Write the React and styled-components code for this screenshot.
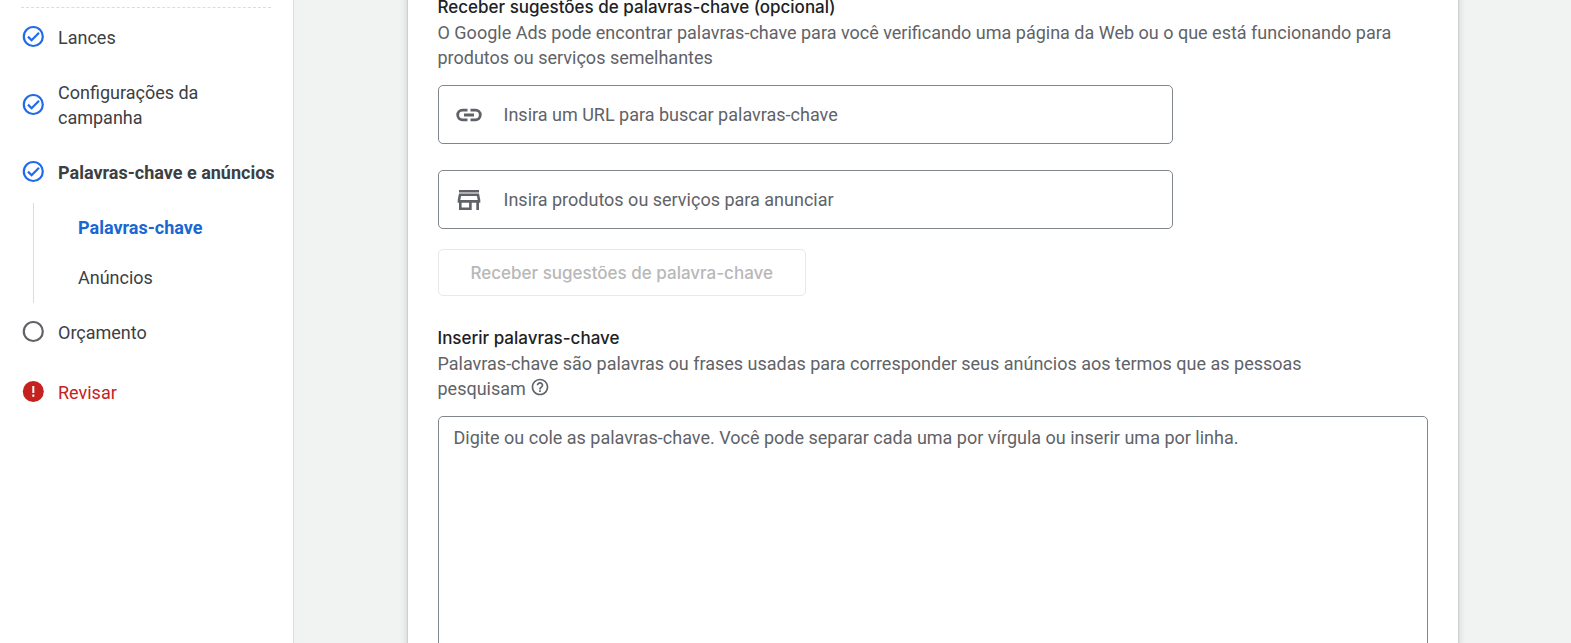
import React, { useState } from 'react';
import styled, { createGlobalStyle, css } from 'styled-components';
import { MdHelpOutline } from 'react-icons/md';

const GlobalStyle = createGlobalStyle`
  :root {
    --text: #3c4043;
    --text-strong: #202124;
    --text-muted: #5f6368;
    --border: #80868b;
    --line: #dadce0;
    --blue: #1f6bea;
    --blue-dark: #1967d2;
    --red: #c5221f;
    --body-font: Roboto, 'Liberation Sans', sans-serif;
    --title-font: Inter, Roboto, sans-serif;
  }
  * {
    box-sizing: border-box;
  }
  body {
    margin: 0;
    font-family: var(--body-font);
    font-size: 18px;
    line-height: 25px;
    color: var(--text);
    overflow: hidden;
  }
`;

const Page = styled.div`
  display: flex;
  height: 100vh;
  background: #f1f3f2;
`;

const Sidebar = styled.nav`
  width: 294px;
  flex-shrink: 0;
  padding: 7px 12px 0 21px;
  background: #fff;
  border-right: 1px solid var(--line);
`;

const Divider = styled.hr`
  width: 250px;
  margin: 0;
  border: 0;
  border-top: 1px dashed var(--line);
`;

const StepList = styled.ul`
  list-style: none;
  margin: 0;
  padding: 0;
`;

const Step = styled.a`
  display: flex;
  align-items: center;
  gap: 12px;
  min-height: 60px;
  padding: 12px 0 13px;
  color: ${({ $error }) => ($error ? 'var(--red)' : 'inherit')};
  font-weight: ${({ $active }) => ($active ? 700 : 400)};
  text-decoration: none;

  svg {
    flex-shrink: 0;
    margin-bottom: 2px;
  }
`;

const SubList = styled.ul`
  list-style: none;
  margin: 0 0 0 12px;
  padding: 0 0 0 44px;
  border-left: 1px solid var(--line);
`;

const SubStep = styled.a`
  display: block;
  line-height: 50px;
  color: ${({ $active }) => ($active ? 'var(--blue-dark)' : 'inherit')};
  font-weight: ${({ $active }) => ($active ? 700 : 400)};
  text-decoration: none;
`;

const Main = styled.main`
  flex: 1;
  min-width: 0;
  display: flex;
  justify-content: center;
  overflow: hidden;
`;

const Card = styled.div`
  width: 100%;
  max-width: 1050px;
  margin-top: -5px;
  padding: 0 30px;
  background: #fff;
  box-shadow: 0 1px 2px rgba(60, 64, 67, 0.3), 0 2px 6px 2px rgba(60, 64, 67, 0.15);
`;

const Section = styled.section`
  margin-bottom: 30px;
`;

const Title = styled.h2`
  margin: 0;
  font-family: var(--title-font);
  font-size: 17px;
  font-weight: 500;
  color: var(--text-strong);
`;

const Description = styled.p`
  max-width: 970px;
  margin: 0 0 15px;
  color: var(--text-muted);
`;

const NoWrap = styled.span`
  white-space: nowrap;

  svg {
    vertical-align: -2px;
  }
`;

const fieldBorder = css`
  border: 1px solid var(--border);
  border-radius: 5px;
`;

const Field = styled.label`
  ${fieldBorder}
  display: flex;
  align-items: center;
  gap: 20px;
  max-width: 735px;
  height: 59px;
  margin-bottom: ${({ $last }) => ($last ? '20px' : '26px')};
  padding: 0 15px;
  color: var(--text-muted);
`;

const inputText = css`
  font: inherit;
  color: var(--text);
  outline: none;

  &::placeholder {
    color: var(--text-muted);
    opacity: 1;
  }
`;

const Input = styled.input`
  ${inputText}
  flex: 1;
  min-width: 0;
  padding: 0;
  border: 0;
  background: none;
`;

const SuggestButton = styled.button`
  height: 47px;
  padding: 0 32px;
  border: 1px solid #e8e8e8;
  border-radius: 5px;
  background: #fff;
  font-family: var(--title-font);
  font-size: 17px;
  font-weight: 500;
  color: #b8b8b8;
`;

const Keywords = styled.textarea`
  ${inputText}
  ${fieldBorder}
  display: block;
  width: 100%;
  height: 300px;
  padding: 8px 15px;
  resize: none;
`;

const DoneIcon = () => (
  <svg width="25" height="25" viewBox="0 0 25 25" fill="none" stroke="var(--blue)" strokeWidth="2.2">
    <circle cx="12.3" cy="12.5" r="9.5" />
    <path d="M7 12.6l3.6 3.6 7.4-7.400" />
  </svg>
);

const TodoIcon = () => (
  <svg width="25" height="25" viewBox="0 0 25 25" fill="none" stroke="var(--text-muted)" strokeWidth="2.2">
    <circle cx="12.3" cy="12.5" r="9.5" />
  </svg>
);

const ErrorIcon = () => (
  <svg width="25" height="25" viewBox="0 0 25 25">
    <circle cx="12.3" cy="12.5" r="10.5" fill="var(--red)" />
    <path d="M11.300 7h2v7h-2zM11.300 15.600h2v2.200h-2z" fill="#fff" />
  </svg>
);

const LinkIcon = () => (
  <svg width="30" height="30" viewBox="0 0 30 30" fill="none" stroke="currentColor" strokeWidth="2.8">
    <path d="M13.500 10.200H8.500a4.800 4.800 0 0 0 0 9.600h5M16.500 10.200h5a4.800 4.800 0 0 1 0 9.600h-5M10 15h10" />
  </svg>
);

const StoreIcon = () => (
  <svg width="30" height="30" viewBox="0 0 30 30" fill="currentColor" fillRule="evenodd">
    <path d="M5 5h20v2.500H5z" />
    <path d="M5 8.500h20l1.300 6.500v2.700H25V25h-2.700v-7.300h-4.600V25H5v-7.300H3.700V15zM7.100 11l-.8 4h17.400l-.8-4zM7.600 17.700v4.800h7.500v-4.800z" />
  </svg>
);

const icons = { done: DoneIcon, todo: TodoIcon, error: ErrorIcon };

const steps = [
  { label: 'Lances', status: 'done' },
  { label: 'Configurações da campanha', status: 'done' },
  {
    label: 'Palavras-chave e anúncios',
    status: 'done',
    active: true,
    children: [{ label: 'Palavras-chave', active: true }, { label: 'Anúncios' }],
  },
  { label: 'Orçamento', status: 'todo' },
  { label: 'Revisar', status: 'error' },
];

const NavStep = ({ label, status, active, children }) => {
  const Icon = icons[status];
  return (
    <li>
      <Step href="#" $active={active} $error={status === 'error'}>
        <Icon />
        <span>{label}</span>
      </Step>
      {children && (
        <SubList>
          {children.map((child) => (
            <li key={child.label}>
              <SubStep href="#" $active={child.active}>{child.label}</SubStep>
            </li>
          ))}
        </SubList>
      )}
    </li>
  );
};

const App = () => {
  const [url, setUrl] = useState('');
  const [products, setProducts] = useState('');
  const [keywords, setKeywords] = useState('');

  return (
    <>
      <GlobalStyle />
      <Page>
        <Sidebar>
          <Divider />
          <StepList>
            {steps.map((step) => (
              <NavStep key={step.label} {...step} />
            ))}
          </StepList>
        </Sidebar>
        <Main>
          <Card>
            <Section>
              <Title>Receber sugestões de palavras-chave (opcional)</Title>
              <Description>
                O Google Ads pode encontrar palavras-chave para você verificando uma página da Web ou o que está
                funcionando para produtos ou serviços semelhantes
              </Description>
              <Field>
                <LinkIcon />
                <Input
                  aria-label="URL"
                  placeholder="Insira um URL para buscar palavras-chave"
                  value={url}
                  onChange={(e) => setUrl(e.target.value)}
                />
              </Field>
              <Field $last>
                <StoreIcon />
                <Input
                  aria-label="Produtos ou serviços"
                  placeholder="Insira produtos ou serviços para anunciar"
                  value={products}
                  onChange={(e) => setProducts(e.target.value)}
                />
              </Field>
              <SuggestButton type="button" disabled={!url && !products}>
                Receber sugestões de palavra-chave
              </SuggestButton>
            </Section>
            <Section>
              <Title id="keywords-title">Inserir palavras-chave</Title>
              <Description>
                Palavras-chave são palavras ou frases usadas para corresponder seus anúncios aos termos que as
                pessoas <NoWrap>pesquisam <MdHelpOutline size={20} /></NoWrap>
              </Description>
              <Keywords
                aria-labelledby="keywords-title"
                placeholder="Digite ou cole as palavras-chave. Você pode separar cada uma por vírgula ou inserir uma por linha."
                value={keywords}
                onChange={(e) => setKeywords(e.target.value)}
              />
            </Section>
          </Card>
        </Main>
      </Page>
    </>
  );
};

export default App;
